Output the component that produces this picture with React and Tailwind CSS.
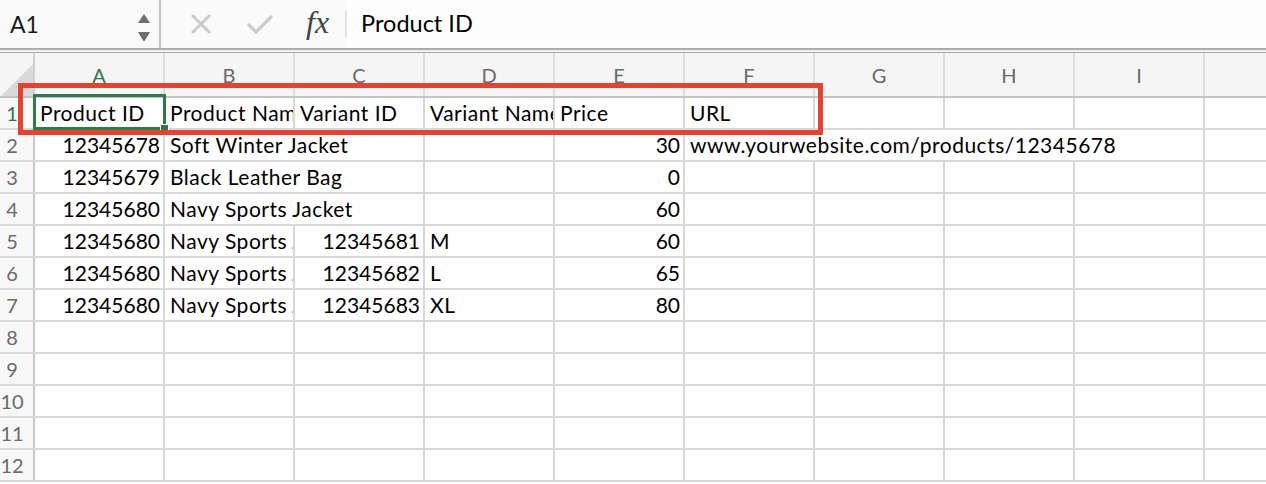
import React from "react";

const COLS = ["A", "B", "C", "D", "E", "F", "G", "H", "I", ""];

const SPAN_W = {
  1: "w-[130px]",
  2: "w-[260px]",
  4: "w-[520px]",
};

const URL = "www.yourwebsite.com/products/12345678";

// each cell: [text, span, align]
const ROWS = [
  [["Product ID"], ["Product Name"], ["Variant ID"], ["Variant Name"], ["Price"], ["URL"], [""], [""], [""], [""]],
  [["12345678", 1, "r"], ["Soft Winter Jacket", 2], [""], ["30", 1, "r"], [URL, 4], [""]],
  [["12345679", 1, "r"], ["Black Leather Bag", 2], [""], ["0", 1, "r"], [""], [""], [""], [""], [""]],
  [["12345680", 1, "r"], ["Navy Sports Jacket", 2], [""], ["60", 1, "r"], [""], [""], [""], [""], [""]],
  [["12345680", 1, "r"], ["Navy Sports Jacket"], ["12345681", 1, "r"], ["M"], ["60", 1, "r"], [""], [""], [""], [""], [""]],
  [["12345680", 1, "r"], ["Navy Sports Jacket"], ["12345682", 1, "r"], ["L"], ["65", 1, "r"], [""], [""], [""], [""], [""]],
  [["12345680", 1, "r"], ["Navy Sports Jacket"], ["12345683", 1, "r"], ["XL"], ["80", 1, "r"], [""], [""], [""], [""], [""]],
  [[""], [""], [""], [""], [""], [""], [""], [""], [""], [""]],
  [[""], [""], [""], [""], [""], [""], [""], [""], [""], [""]],
  [[""], [""], [""], [""], [""], [""], [""], [""], [""], [""]],
  [[""], [""], [""], [""], [""], [""], [""], [""], [""], [""]],
  [[""], [""], [""], [""], [""], [""], [""], [""], [""], [""]],
];

const FormulaBar = () => (
  <div className="flex items-stretch h-[48px] bg-[#fafafa]">
    <div className="w-[159px] flex items-center justify-between pl-[10px] pr-[8px]">
      <span className="text-[23px] text-[#1a1a1a]">A1</span>
      <svg width="14" height="34" viewBox="0 0 14 34">
        <path d="M7 7 L13 16 L1 16 Z" fill="#6e6e6e" />
        <path d="M1 27 L13 27 L7 37 Z" fill="#6e6e6e" transform="translate(0 -2)" />
      </svg>
    </div>
    <div className="w-[2px] bg-[#c2c2c2]" />
    <div className="flex items-center pl-[28px]">
      <svg width="24" height="24" viewBox="0 0 24 24">
        <path d="M3 3 L21 21 M21 3 L3 21" stroke="#cbcbcb" strokeWidth="3" />
      </svg>
      <svg className="ml-[33px]" width="28" height="24" viewBox="0 0 28 24">
        <path d="M2 12 L10 20 L26 4" stroke="#cbcbcb" strokeWidth="3.2" fill="none" />
      </svg>
      <span className="ml-[32px] italic text-[32px] leading-none text-[#444] font-['Liberation_Serif','DejaVu_Serif',serif] -mt-[4px]">
        fx
      </span>
      <div className="ml-[16px] w-[2px] h-[28px] bg-[#e2e2e2]" />
    </div>
    <div className="flex-1 flex items-center pl-[14px] bg-[#fdfdfd]">
      <span className="text-[23.5px] text-black">Product ID</span>
    </div>
  </div>
);

const HeaderRow = () => (
  <div className="flex h-[45px] border-b-2 border-[#c4c4c4] bg-[#f5f5f5]">
    <div className="w-[35px] shrink-0 border-r-2 border-[#d0d0d0] relative overflow-hidden">
      <svg className="absolute left-0 bottom-0" width="33" height="33" viewBox="0 0 33 33">
        <path d="M33 1 L33 33 L1 33 Z" fill="#d9d9d9" />
      </svg>
    </div>
    {COLS.map((c, i) => (
      <div
        key={i}
        className={`w-[130px] shrink-0 flex items-center justify-center border-r-2 border-[#dedede] text-[20px] ${
          c === "A" ? "text-[#2f7a48]" : "text-[#6a6a6a]"
        }`}
      >
        {c}
      </div>
    ))}
  </div>
);

const Row = ({ n, cells }) => (
  <div className="flex h-[32px] border-b-2 border-[#d8d8d8]">
    <div
      className={`w-[35px] shrink-0 flex items-center justify-center pr-[9px] border-r-2 border-[#c8c8c8] bg-[#f8f8f8] text-[20px] ${
        n === 1 ? "text-[#2f7a48]" : "text-[#6a6a6a]"
      }`}
    >
      {n}
    </div>
    {cells.map(([text, span = 1, align], i) => (
      <div
        key={i}
        className={`${SPAN_W[span]} shrink-0 h-full flex items-center overflow-hidden whitespace-nowrap border-r-2 border-[#d8d8d8] text-[21px] text-black ${
          align === "r" ? "justify-end pr-[3px]" : "pl-[5px] tracking-[0.5px]"
        }`}
      >
        {text}
      </div>
    ))}
  </div>
);

export default function App() {
  return (
    <div className="relative w-full h-[484px] overflow-hidden bg-white font-['Lato','Liberation_Sans',sans-serif]">
      <FormulaBar />
      <div className="h-[5px] border-t-2 border-b border-[#acacac] bg-[#f2f2f2]" />
      <HeaderRow />
      {ROWS.map((cells, i) => (
        <Row key={i} n={i + 1} cells={cells} />
      ))}

      {/* active cell */}
      <div className="absolute left-[33px] top-[94px] w-[133px] h-[36px] border-[3px] border-[#2f7a48]">
        <div className="absolute -right-[6px] -bottom-[6px] w-[9px] h-[9px] bg-[#2f7a48] border border-white" />
      </div>

      {/* annotation */}
      <div className="absolute left-[18px] top-[83px] w-[805px] h-[52px] border-[5px] border-[#e5432f]" />
    </div>
  );
}
